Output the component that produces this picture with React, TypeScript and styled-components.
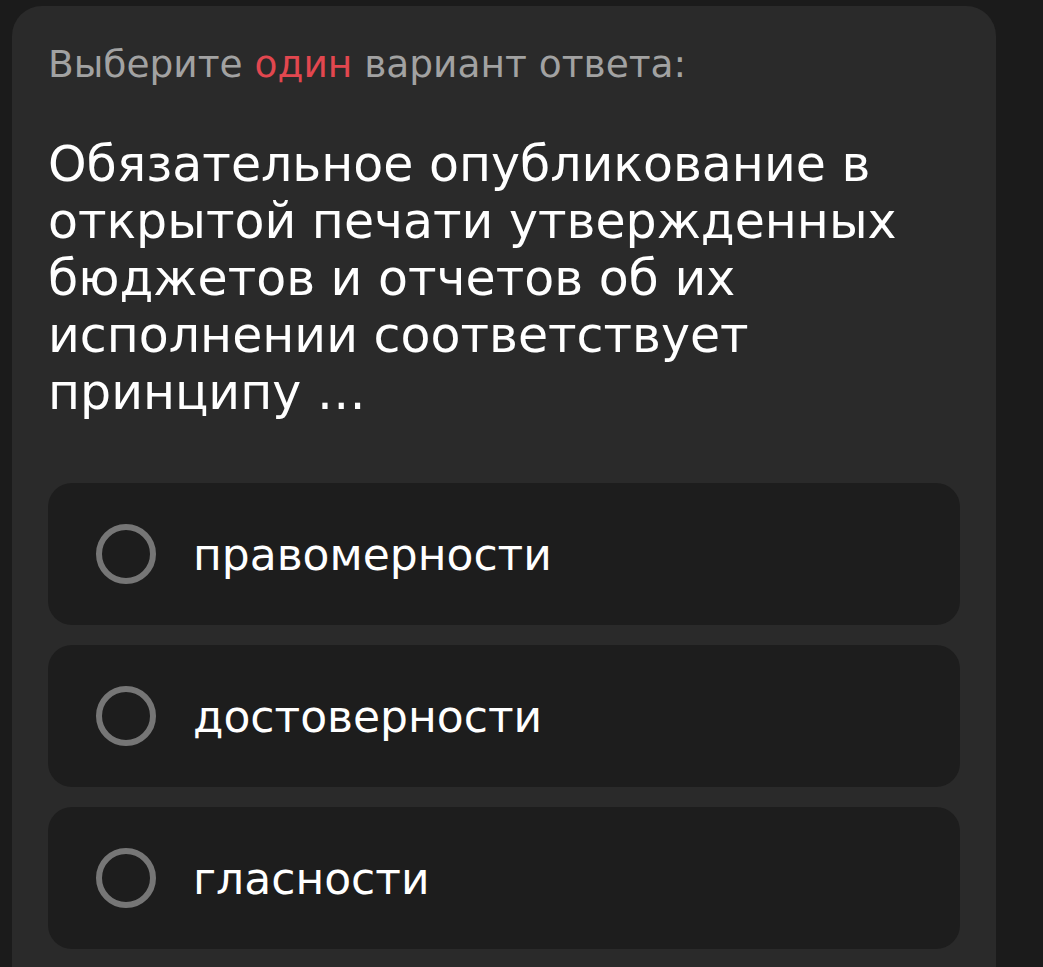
import styled, { createGlobalStyle } from 'styled-components'

const GlobalStyle = createGlobalStyle`
  body {
    margin: 0;
    background: #1b1b1b;
    font-family: 'DejaVu Sans', 'Noto Sans', sans-serif;
  }
`

const options = ['правомерности', 'достоверности', 'гласности']

export default function App() {
  return (
    <>
      <GlobalStyle />
      <Page>
        <Card>
          <Hint>
            Выберите <Accent>один</Accent> вариант ответа:
          </Hint>
          <Question>
            Обязательное опубликование в открытой печати утвержденных бюджетов и
            отчетов об их исполнении соответствует принципу …
          </Question>
          <OptionList>
            {options.map((option) => (
              <Option key={option}>
                <Radio />
                <OptionText>{option}</OptionText>
              </Option>
            ))}
          </OptionList>
        </Card>
      </Page>
    </>
  )
}

// Styled components
const Page = styled.div`
  height: 967px;
  overflow: hidden;
  padding: 6px 47px 0 12px;
  box-sizing: border-box;
`

const Card = styled.div`
  width: 984px;
  min-height: 1000px;
  box-sizing: border-box;
  background: #2a2a2a;
  border-radius: 30px 30px 0 0;
  padding: 36px 36px 0 36px;
`

const Hint = styled.div`
  font-size: 37.5px;
  line-height: 44px;
  color: #a2a2a2;
`

const Accent = styled.span`
  color: #e2474f;
`

const Question = styled.div`
  margin-top: 50px;
  font-size: 49px;
  line-height: 57px;
  color: #ffffff;
`

const OptionList = styled.div`
  margin-top: 62px;
  display: flex;
  flex-direction: column;
  gap: 20px;
`

const Option = styled.div`
  height: 142px;
  box-sizing: border-box;
  background: #1d1d1d;
  border-radius: 24px;
  display: flex;
  align-items: center;
  gap: 37px;
  padding-left: 48px;
`

const Radio = styled.div`
  width: 60px;
  height: 60px;
  box-sizing: border-box;
  border: 6px solid #767676;
  border-radius: 50%;
  flex-shrink: 0;
`

const OptionText = styled.div`
  font-size: 44px;
  color: #ffffff;
`
